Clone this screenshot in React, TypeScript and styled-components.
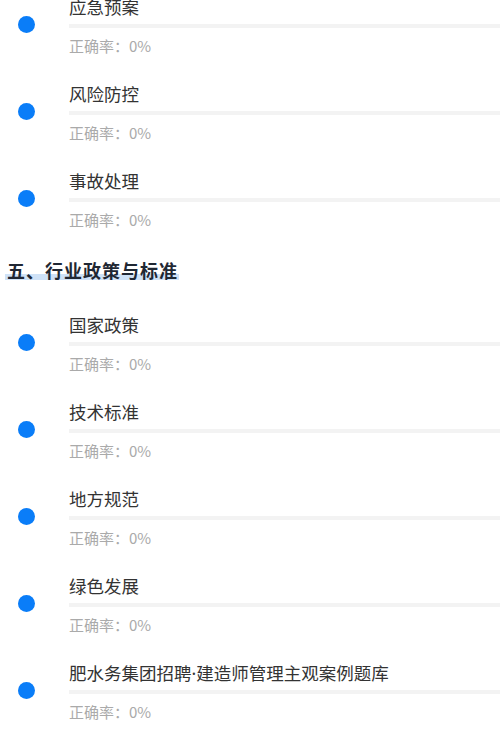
import React from 'react';
import styled, { createGlobalStyle } from 'styled-components';

const GlobalStyle = createGlobalStyle`
  html, body {
    margin: 0;
    padding: 0;
    background: #fff;
    overflow: hidden;
  }
  body {
    font-family: "Noto Sans CJK SC", "Noto Sans", sans-serif;
  }
`;

const Page = styled.div`
  width: 500px;
  margin-top: -5px;
  overflow: hidden;
`;

const Section = styled.section`
  display: flex;
  flex-direction: column;
`;

const SectionTitle = styled.h2`
  align-self: flex-start;
  margin: 2px 0 31px 5px;
  padding: 0 1px 0 2px;
  font-size: 18px;
  line-height: 24px;
  font-weight: 700;
  letter-spacing: 1px;
  color: #1f2733;
  background: linear-gradient(to bottom, transparent 16px, #cfe2f7 16px, #cfe2f7 22px, transparent 22px);
`;

const Item = styled.div`
  display: flex;
  align-items: flex-start;
  margin-bottom: 26px;
`;

const DotCol = styled.div`
  width: 69px;
  flex-shrink: 0;
  display: flex;
  justify-content: center;
  padding: 21px 17px 0 0;
  box-sizing: border-box;
`;

const Dot = styled.span`
  width: 17px;
  height: 17px;
  border-radius: 50%;
  background: #0a7df8;
`;

const Content = styled.div`
  flex: 1;
  display: flex;
  flex-direction: column;
`;

const Title = styled.div`
  font-size: 17.5px;
  line-height: 24px;
  color: #333;
  white-space: nowrap;
`;

const Sep = styled.span`
  font-family: "Noto Sans", sans-serif;
`;

const Bar = styled.div`
  height: 4px;
  margin-top: 5px;
  background: #f3f3f3;
`;

const Rate = styled.div`
  margin-top: 8px;
  font-size: 15px;
  line-height: 20px;
  color: #aaa;
`;

interface ItemProps {
  name: string;
  rate?: number;
}

// a narrow middle dot, as in the original title
const renderName = (name: string) =>
  name.split('·').map((part, i) => (
    <React.Fragment key={i}>
      {i > 0 && <Sep>·</Sep>}
      {part}
    </React.Fragment>
  ));

const TopicItem: React.FC<ItemProps> = ({ name, rate = 0 }) => (
  <Item>
    <DotCol>
      <Dot />
    </DotCol>
    <Content>
      <Title>{renderName(name)}</Title>
      <Bar />
      <Rate>正确率：{rate}%</Rate>
    </Content>
  </Item>
);

const prevTopics = ['应急预案', '风险防控', '事故处理'];
const policyTopics = [
  '国家政策',
  '技术标准',
  '地方规范',
  '绿色发展',
  '肥水务集团招聘·建造师管理主观案例题库'
];

const App: React.FC = () => (
  <Page>
    <GlobalStyle />
    <Section>
      {prevTopics.map((t) => (
        <TopicItem key={t} name={t} />
      ))}
    </Section>
    <Section>
      <SectionTitle>五、行业政策与标准</SectionTitle>
      {policyTopics.map((t) => (
        <TopicItem key={t} name={t} />
      ))}
    </Section>
  </Page>
);

export default App;
